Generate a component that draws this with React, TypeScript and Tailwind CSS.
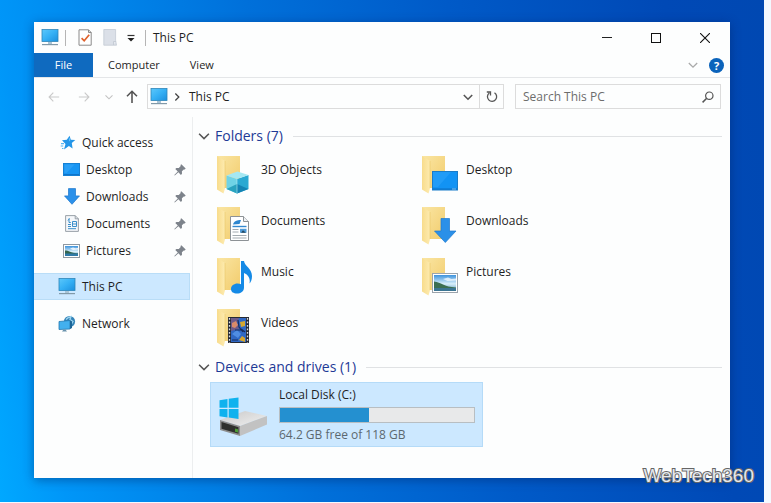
import type { ReactNode } from "react";

function Monitor({ className }: { className: string }) {
  return (
    <svg viewBox="0 0 18 17" className={className} aria-hidden="true">
      <defs>
        <linearGradient id="screen" x1="0" y1="0" x2="1" y2="1">
          <stop offset="0" stopColor="#5cc8fb" />
          <stop offset="0.5" stopColor="#35b0f5" />
          <stop offset="1" stopColor="#1c8fdd" />
        </linearGradient>
      </defs>
      <rect x="1" y="0.5" width="16" height="12" fill="url(#screen)" stroke="#2f86b8" strokeWidth="0.8" />
      <path d="M7 13h4v2H7z" fill="#a9c4d6" />
      <path d="M1 15.6h16" stroke="#8199a8" strokeWidth="1.2" />
    </svg>
  );
}

function CheckPage() {
  return (
    <svg viewBox="0 0 14 17" className="h-[17px] w-[14px]" aria-hidden="true">
      <path d="M1 .8h9.5l2.7 2.7v12.7H1z" fill="#fff" stroke="#8a8a8a" />
      <path d="M10.5.8v2.7h2.7" fill="none" stroke="#8a8a8a" />
      <path d="M3.6 9.2l2.6 2.6 5-6" fill="none" stroke="#e0622c" strokeWidth="1.7" />
    </svg>
  );
}

function BlankPage() {
  return (
    <svg viewBox="0 0 14 17" className="h-[17px] w-[14px]" aria-hidden="true">
      <path d="M.8.5h11.8v10.8l.9 4.9H.8z" fill="#dbe0e8" stroke="#c3cad4" strokeWidth="0.8" />
      <path d="M10.500 16v-3.500h2.500" fill="#e6eaf0" stroke="#bfc6d0" strokeWidth="0.8" />
    </svg>
  );
}

function Chevron({ className, width = 1.3 }: { className: string; width?: number }) {
  return (
    <svg viewBox="0 0 12 12" className={className} aria-hidden="true">
      <path d="M1.8 4l4.2 4.2L10.2 4" fill="none" stroke="currentColor" strokeWidth={width} />
    </svg>
  );
}

function Arrow({ className, width = 1.3 }: { className: string; width?: number }) {
  return (
    <svg viewBox="0 0 14 14" className={className} aria-hidden="true">
      <path d="M13 7H1.5M6.2 2L1.3 7l4.9 5" fill="none" stroke="currentColor" strokeWidth={width} />
    </svg>
  );
}

function Pin() {
  return (
    <svg viewBox="0 0 12 12" className="size-3" aria-hidden="true">
      <path d="M7.3.3l4.400 4.300-1 .9-.9-.1-1.900 1.900.1 2.500-1.100 1.100-2.500-2.600L.8 11.600l-.5-.5L3.800 7.500 1.300 5l1.100-1.100 2.400.1 1.900-1.900-.2-1z" fill="#7d838b" />
    </svg>
  );
}

function Star() {
  return (
    <svg viewBox="0 0 16 15" className="h-[15px] w-4" aria-hidden="true">
      <path d="M9.600.7l1.200 4 4.500.3-3.500 3 .8 5.400-3.700-2.500-4.900 3.600 1.500-5.400L2 5.200l4.800-.4z" fill="#2496e8" />
      <path d="M1 8.600h3M.7 11h2.500M2 13.500h1.500" stroke="#57b6f2" strokeWidth="1.100" />
      <path d="M9.300 3.200l.4 3" stroke="#6cc3fa" />
    </svg>
  );
}

function DesktopIcon() {
  return (
    <svg viewBox="0 0 17 13" className="h-[13px] w-[17px]" aria-hidden="true">
      <rect x=".5" y=".5" width="16" height="12" fill="#1795f3" stroke="#1580d4" />
      <path d="M1 11.500h15" stroke="#0f74ca" />
      <path d="M1.500 1.500h10l-8 8.500h-2z" fill="#37a7f8" opacity=".6" />
    </svg>
  );
}

function DownIcon() {
  return (
    <svg viewBox="0 0 16 17" className="h-[17px] w-4" aria-hidden="true">
      <path d="M4.500.6h7v7.300h4L8 16.300.5 7.900h4z" fill="#2b91ea" stroke="#1b76cc" strokeWidth=".7" />
    </svg>
  );
}

function DocumentIcon() {
  return (
    <svg viewBox="0 0 14 17" className="h-[17px] w-[14px]" aria-hidden="true">
      <path d="M.6.6h9.600l3.200 3.200v12.600H.6z" fill="#f4f7fa" stroke="#8e979f" strokeWidth=".9" />
      <path d="M10.200.6v3.200h3.200" fill="none" stroke="#8e979f" strokeWidth=".9" />
      <path d="M3 5.500l1.500-2M4 3.500v4h1.800M7.500 6.500h4v5h-4zM7.500 9h4M3 9.500h3M3 11.500h3M3 13.700h8" fill="none" stroke="#3a8fcb" />
    </svg>
  );
}

function Sky() {
  return (
    <defs>
      <linearGradient id="sky" x1="0" y1="0" x2="0" y2="1">
        <stop offset="0" stopColor="#3d93dc" />
        <stop offset=".55" stopColor="#d8effb" />
        <stop offset="1" stopColor="#5798be" />
      </linearGradient>
    </defs>
  );
}

function PictureIcon() {
  return (
    <svg viewBox="0 0 17 14" className="h-[14px] w-[17px]" aria-hidden="true">
      <Sky />
      <rect x=".5" y=".5" width="16" height="13" fill="#fff" stroke="#8f99a2" />
      <rect x="2" y="2" width="13" height="10" fill="url(#sky)" />
      <path d="M2 6.500c3-.5 4 1 6.500 1.800s4 .9 6.500 1V10H2z" fill="#34664f" />
      <path d="M2 9.500h13V12H2z" fill="#2f7aa8" />
      <path d="M7 4.500l3-1 2.500.8 2.500-.3v1.500l-5 .4z" fill="#fff" opacity=".8" />
    </svg>
  );
}

function NetworkIcon() {
  return (
    <svg viewBox="0 0 18 17" className="h-[17px] w-[18px]" aria-hidden="true">
      <circle cx="11.500" cy="6.500" r="5.600" fill="#3484b8" />
      <path d="M8 4.500c2-2.500 4-2.800 5-3l-1 3 3 2-2 3.500" fill="none" stroke="#9bd3ef" strokeWidth="1.300" />
      <path d="M1 6.500l11-1v8.500L1 14.500z" fill="#43b0ee" stroke="#2479b0" strokeWidth=".8" />
      <path d="M12 5.500l2 1v6.500l-2 1z" fill="#1d6698" />
      <path d="M4 16.500h5L7.500 14.500h-2z" fill="#6a93ad" />
    </svg>
  );
}

function Folder({ children }: { children?: ReactNode }) {
  return (
    <svg viewBox="0 0 38 40" className="h-10 w-[38px] shrink-0" aria-hidden="true">
      <defs>
        <linearGradient id="back" x1="0" y1="0" x2="1" y2="1">
          <stop offset="0" stopColor="#fae6a4" />
          <stop offset="1" stopColor="#f2cc6c" />
        </linearGradient>
        <linearGradient id="flap" x1="0" y1="0" x2="1" y2="0">
          <stop offset="0" stopColor="#f8dc8c" />
          <stop offset="1" stopColor="#fdebb0" />
        </linearGradient>
      </defs>
      <path d="M0 0h23v32H6z" fill="url(#back)" />
      <path d="M0 0l8 5v27.500l-1.500 5L0 33.500z" fill="url(#flap)" />
      <path d="M8 5v27" stroke="#e9c766" strokeWidth=".6" />
      {children}
    </svg>
  );
}

function CubeArt() {
  return (
    <>
      <path d="M9.500 19.500L20 23v14.500L9.500 33z" fill="#6fd3e6" />
      <path d="M20 23l11.500-4v14L20 37.500z" fill="#2aa9d2" />
      <path d="M20.500 15.500l11 3.500L20 23 9.500 19.500z" fill="#a5e8f2" />
      <path d="M9.500 33L20 28v9.500z" fill="#2aa3bf" />
      <path d="M20 28l11.500 5L20 37.500z" fill="#1484b4" />
      <path d="M20 23v14.500" stroke="#b7ecf5" strokeWidth=".6" />
    </>
  );
}

function PageArt() {
  return (
    <>
      <path d="M13.500 9.500h13l5 5v19h-18z" fill="#fff" stroke="#8d9296" />
      <path d="M26.500 9.500v5h5" fill="#eef0f2" stroke="#8d9296" />
      <path d="M16 17.500c1-3.500 4-4.500 8-4.500l-1.500 4z" fill="#2e86cf" />
      <path d="M15.500 19.500h14" stroke="#3489cf" strokeWidth="1.400" />
      <path d="M15.500 22.500h6M15.500 25h6M15.500 28.500h14M15.500 31h14" stroke="#a4abb0" />
      <path d="M23 21.800h6.500v4H23z" fill="#4f9bd8" />
      <path d="M24 25.800l2-2.500 3 2.500z" fill="#254860" />
    </>
  );
}

function NoteArt() {
  return (
    <path d="M24 3h3c.5 5 8 7.500 8 15 0 3.500-1 6-2.500 7.500 1.200-5-1.500-9-5.500-10.500v14.500c0 4-3.500 6-7 6-3.500 0-6-1.500-6-4.500 0-3.200 3-5.500 6.500-5.500 1.500 0 2.700.3 3.500.8z" fill="#158ae6" />
  );
}

function FilmArt() {
  return (
    <>
      <path d="M11 8h21v26H11z" fill="#262a33" />
      <path d="M14 9h15v24H14z" fill="#2f68c4" />
      <path d="M14 9h8l-2 5 2 6-8 2z" fill="#6d5a88" />
      <path d="M15 14l4-2 2 4-3 3-3-1z" fill="#d98a69" />
      <path d="M23 13l5-1v5l-4 1z" fill="#d5a82f" />
      <path d="M15 25l5-4 4 4-3 4z" fill="#4f8de2" />
      <path d="M22 31l3-4 3 2v4z" fill="#d8a62c" />
      <path d="M18 21h8M21 11l1 7 4 5M15 31h6M24 20l4 3" stroke="#182c5c" strokeWidth="1.200" fill="none" />
      <path d="M12.500 9v25M30.500 9v25" stroke="#d9dce2" strokeWidth="1.300" strokeDasharray="1.800 1.700" />
    </>
  );
}

function DesktopArt() {
  return (
    <>
      <rect x="10.500" y="15.500" width="25" height="18.500" fill="#1293f4" stroke="#1a7cc9" />
      <path d="M11 16h18L16 31h-5z" fill="#2ba2f8" opacity=".6" />
      <path d="M11 33h24" stroke="#0b6fc4" />
      <path d="M30 33h4" stroke="#7cc0f4" />
    </>
  );
}

function DownArt() {
  return <path d="M19 11.500h8.500v12.500h6.500L23.300 35.500 12.500 24H19z" fill="#2b90e8" stroke="#1c78cf" strokeWidth=".7" />;
}

function PictureArt() {
  return (
    <>
      <Sky />
      <rect x="10.500" y="15.500" width="25" height="19" fill="#fff" stroke="#9ba4ac" />
      <rect x="12" y="17" width="22" height="16" fill="url(#sky)" />
      <path d="M12 23.500c4 .5 6 1.500 9 3s7 2.500 13 3V31H12z" fill="#3b6f52" />
      <path d="M12 30h22v3H12z" fill="#3b7593" />
      <path d="M21 21l5-1.500 3.500 1.500 4.500-.5v2l-8.500.5z" fill="#fff" opacity=".7" />
    </>
  );
}

function DriveIcon() {
  return (
    <svg viewBox="0 0 50 40" className="h-10 w-[50px] shrink-0" aria-hidden="true">
      <defs>
        <linearGradient id="lid" x1="0" y1="0" x2="1" y2="1">
          <stop offset="0" stopColor="#c9c9c9" />
          <stop offset="1" stopColor="#f1f1f1" />
        </linearGradient>
      </defs>
      <path d="M1 23l25-9 22 5-27 10z" fill="url(#lid)" />
      <path d="M21 29l27-10v8.500L21 39z" fill="#c2c2c2" />
      <path d="M1 23l20 6v10L1 33z" fill="#8c8c8c" />
      <path d="M2.500 25l17 5.300v6.500l-17-5z" fill="#2f302d" />
      <path d="M16 31.500l3 .8v3.200l-3-.8z" fill="#4c9c35" />
      <path d="M.5 3.200l8-1.200v8.700h-8zM9.700 1.800L19.500.4v10.300H9.700zM.5 11.900h8v8.600l-8-1.200zM9.700 11.900h9.800V22l-9.800-1.400z" fill="#0fb2ee" />
    </svg>
  );
}

const quickLinks: { label: string; icon: ReactNode }[] = [
  { label: "Desktop", icon: <DesktopIcon /> },
  { label: "Downloads", icon: <DownIcon /> },
  { label: "Documents", icon: <DocumentIcon /> },
  { label: "Pictures", icon: <PictureIcon /> },
];

const folders: { label: string; art: ReactNode }[] = [
  { label: "3D Objects", art: <CubeArt /> },
  { label: "Desktop", art: <DesktopArt /> },
  { label: "Documents", art: <PageArt /> },
  { label: "Downloads", art: <DownArt /> },
  { label: "Music", art: <NoteArt /> },
  { label: "Pictures", art: <PictureArt /> },
  { label: "Videos", art: <FilmArt /> },
];

function SectionHeading({ children }: { children: string }) {
  return (
    <h2 className="flex h-5 items-center text-sm leading-5 text-[#1e3a96]">
      <button className="flex items-center gap-1">
        <Chevron className="size-3.5 text-[#555]" />
        {children}
      </button>
      <span className="ml-2.5 h-px flex-1 bg-[#e0e2e4]" />
    </h2>
  );
}

export default function App() {
  return (
    <div className="min-h-screen bg-[#f3f9ff] pr-[7px] pb-px font-['Open_Sans','Noto_Sans',sans-serif] text-xs text-[#1f1f1f]">
      <div className="relative flex min-h-[calc(100vh-1px)] flex-col bg-[linear-gradient(82deg,#00a8ff_0%,#0096f8_8%,#0070da_38%,#005ac8_62%,#0049b6_88%,#0048b2_100%)] px-[34px] pt-[22px] pb-6">
        <main className="flex flex-1 flex-col bg-[#fdfefe] shadow-[0_2px_10px_rgba(0,30,90,0.45)]">
          <header className="flex h-[31px] items-center pl-[7px]">
            <Monitor className="h-[17px] w-[18px]" />
            <span className="mx-1.5 h-4 w-px bg-[#b5b5b5]" />
            <button aria-label="Properties" className="ml-1.5"><CheckPage /></button>
            <button aria-label="New folder" className="ml-[11px]"><BlankPage /></button>
            <button aria-label="Customize toolbar" className="ml-2.5">
              <svg viewBox="0 0 8 8" className="size-2" aria-hidden="true">
                <path d="M.5 1.500h7" stroke="#333" strokeWidth="1.200" />
                <path d="M.5 4h7L4 7.500z" fill="#222" />
              </svg>
            </button>
            <span className="mr-[7px] ml-2.5 h-4 w-px bg-[#b5b5b5]" />
            <h1>This PC</h1>
            <div className="ml-auto flex pr-px">
              <button aria-label="Minimize" className="flex h-[31px] w-[49px] items-center justify-center">
                <span className="h-px w-2.5 bg-[#222]" />
              </button>
              <button aria-label="Maximize" className="flex h-[31px] w-[49px] items-center justify-center">
                <span className="size-2.5 border border-[#111]" />
              </button>
              <button aria-label="Close" className="flex h-[31px] w-[49px] items-center justify-center">
                <svg viewBox="0 0 10 10" className="size-2.5" aria-hidden="true">
                  <path d="M0 0l10 10M10 0L0 10" stroke="#111" strokeWidth="1.100" />
                </svg>
              </button>
            </div>
          </header>

          <nav className="flex h-[25px] items-center border-b border-[#e4e6e8] text-[11px]">
            <button className="h-full w-[59px] bg-[#0f6abf] text-white">File</button>
            <button className="ml-[15px]">Computer</button>
            <button className="ml-[30px]">View</button>
            <button aria-label="Expand ribbon" className="ml-auto text-[#aaa]"><Chevron className="size-3" /></button>
            <button aria-label="Help" className="mr-1.5 ml-2.5 size-[15px] rounded-full bg-[#0b63bb] text-[11px] leading-[15px] font-bold text-white">?</button>
          </nav>

          <div className="flex items-center pt-1.5 pr-[9px] pl-3.5">
            <button aria-label="Back" className="text-[#cacaca]"><Arrow className="size-3" /></button>
            <button aria-label="Forward" className="ml-[18px] text-[#cacaca]"><Arrow className="size-3 rotate-180" /></button>
            <button aria-label="Recent locations" className="ml-3.5 text-[#c2c2c2]"><Chevron className="size-2.5" /></button>
            <button aria-label="Up" className="ml-[11px] text-[#555]"><Arrow className="size-3.5 rotate-90" width={1.6} /></button>
            <div className="ml-2 flex h-[25px] flex-1 items-center border border-[#dcdcdc] pl-0.5">
              <Monitor className="h-[17px] w-[18px]" />
              <Chevron className="ml-1 size-2.5 -rotate-90 text-[#444]" width={1.5} />
              <span className="ml-[7px]">This PC</span>
              <button aria-label="Previous locations" className="mr-[5px] ml-auto text-[#555]"><Chevron className="size-3" width={1.6} /></button>
              <button aria-label="Refresh" className="flex h-full w-6 items-center justify-center border-l border-[#dcdcdc]">
                <svg viewBox="0 0 12 13" className="h-[13px] w-3" aria-hidden="true">
                  <path d="M8.500 2.800a4.600 4.600 0 1 1-5.200.2M.8 2h3.700v3.600" fill="none" stroke="#555" strokeWidth="1.300" />
                </svg>
              </button>
            </div>
            <label className="ml-[11px] flex h-[25px] w-[206px] items-center border border-[#dcdcdc] pr-1.5 pl-[7px]">
              <input type="text" aria-label="Search This PC" placeholder="Search This PC" className="min-w-0 flex-1 bg-transparent outline-none placeholder:text-[#6d6d6d]" />
              <svg viewBox="0 0 12 12" className="size-3" aria-hidden="true">
                <circle cx="7.300" cy="4.700" r="3.700" fill="none" stroke="#555" strokeWidth="1.200" />
                <path d="M4.700 7.300L.6 11.400" stroke="#555" strokeWidth="1.500" />
              </svg>
            </label>
          </div>

          <div className="flex flex-1 pt-2">
            <aside className="w-[159px] border-r border-[#eceeef] pt-3 pr-0.5 pb-2">
              <a href="#quick" className="flex h-[27px] items-center gap-1.5 pl-[26px]"><Star />Quick access</a>
              <ul>
                {quickLinks.map(({ label, icon }) => (
                  <li key={label}>
                    <a href={"#" + label} className="flex h-[27px] items-center pr-1 pl-[29px]">
                      <span className="mr-1.5 flex w-[17px] justify-center">{icon}</span>
                      {label}
                      <span className="ml-auto"><Pin /></span>
                    </a>
                  </li>
                ))}
              </ul>
              <a href="#pc" className="mt-[9px] flex h-[27px] items-center gap-1.5 border-y border-r border-[#b9ddf7] bg-[#cce8ff] pl-6"><Monitor className="h-[17px] w-[18px]" />This PC</a>
              <a href="#network" className="mt-2.5 flex h-[27px] items-center gap-1.5 pl-6"><NetworkIcon />Network</a>
            </aside>

            <section className="flex-1 pt-[9px] pr-2 pl-1">
              <SectionHeading>Folders (7)</SectionHeading>
              <ul className="mt-2.5 grid grid-cols-[205px_205px] pl-5">
                {folders.map(({ label, art }) => (
                  <li key={label} className="flex h-[51px] gap-1.5">
                    <Folder>{art}</Folder>
                    <span className="pt-1.5 leading-4">{label}</span>
                  </li>
                ))}
              </ul>
              <div className="-mt-[3px]">
                <SectionHeading>Devices and drives (1)</SectionHeading>
              </div>
              <div className="mt-[5px] ml-[13px] flex h-[65px] w-[273px] gap-2.5 border border-[#b5dbf8] bg-[#cce8ff] pr-[7px] pl-2">
                <div className="pt-3.5"><DriveIcon /></div>
                <div className="flex-1 pt-1 leading-4">
                  <p>Local Disk (C:)</p>
                  <div className="mt-1 h-4 border border-[#b8bec2] bg-[#e8e9ea]">
                    <div className="h-full w-[46%] bg-[#2490d0]" />
                  </div>
                  <p className="mt-1 text-[#5c6870]">64.2 GB free of 118 GB</p>
                </div>
              </div>
            </section>
          </div>
        </main>
        <p className="absolute right-2.5 bottom-3.5 font-['Liberation_Sans',Arial,sans-serif] text-[19px] leading-6 text-[#e4e8ee] [-webkit-text-stroke:2px_#666] [paint-order:stroke_fill]">WebTech360</p>
      </div>
    </div>
  );
}
